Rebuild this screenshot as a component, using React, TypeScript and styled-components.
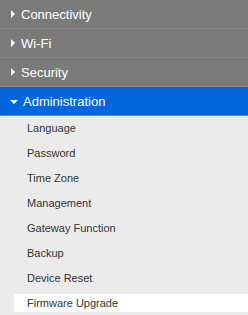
import React from "react";
import styled, { createGlobalStyle } from "styled-components";

const GlobalStyle = createGlobalStyle`
  html, body {
    margin: 0;
    padding: 0;
    background: #ebebeb;
  }
  body {
    font-family: "Liberation Sans", Arial, sans-serif;
  }
`;

const sections = ["Connectivity", "Wi-Fi", "Security"];
const items = [
  "Language",
  "Password",
  "Time Zone",
  "Management",
  "Gateway Function",
  "Backup",
  "Device Reset",
  "Firmware Upgrade",
];

function App() {
  return (
    <>
      <GlobalStyle />
      <Menu>
        {sections.map((name) => (
          <Section key={name}>
            <Arrow />
            {name}
          </Section>
        ))}
        <Section $active>
          <Arrow $open />
          Administration
        </Section>
        <SubList>
          {items.map((name) => (
            <SubItem key={name} $selected={name === "Firmware Upgrade"}>
              {name}
            </SubItem>
          ))}
        </SubList>
      </Menu>
    </>
  );
}

const Menu = styled.div`
  width: 248px;
  height: 315px;
  background: #ebebeb;
  display: flex;
  flex-direction: column;
  overflow: hidden;
`;

const Section = styled.div<{ $active?: boolean }>`
  flex-shrink: 0;
  height: 28px;
  display: flex;
  align-items: center;
  gap: 5px;
  padding-left: 10px;
  font-size: 13px;
  color: #fff;
  background: ${(p) => (p.$active ? "#0066dc" : "#7a7a7a")};
  border-bottom: 1px solid ${(p) => (p.$active ? "#3d8ff0" : "#8c8c8c")};
  box-sizing: content-box;
`;

const Arrow = styled.span<{ $open?: boolean }>`
  width: 0;
  height: 0;
  ${(p) =>
    p.$open
      ? `border-left: 4px solid transparent;
         border-right: 4px solid transparent;
         border-top: 4px solid #fff;
         margin-top: 2px;`
      : `border-top: 4px solid transparent;
         border-bottom: 4px solid transparent;
         border-left: 4px solid #fff;
         margin-left: 1px;
         margin-right: 1px;`}
`;

const SubList = styled.div`
  flex-shrink: 0;
  display: flex;
  flex-direction: column;
  padding-top: 3px;
  padding-left: 14px;
`;

const SubItem = styled.div<{ $selected?: boolean }>`
  flex-shrink: 0;
  height: 18px;
  margin-bottom: 7px;
  display: flex;
  align-items: center;
  padding-left: 13px;
  font-size: 11px;
  color: #333;
  background: ${(p) => (p.$selected ? "#fff" : "transparent")};
`;

export default App;
